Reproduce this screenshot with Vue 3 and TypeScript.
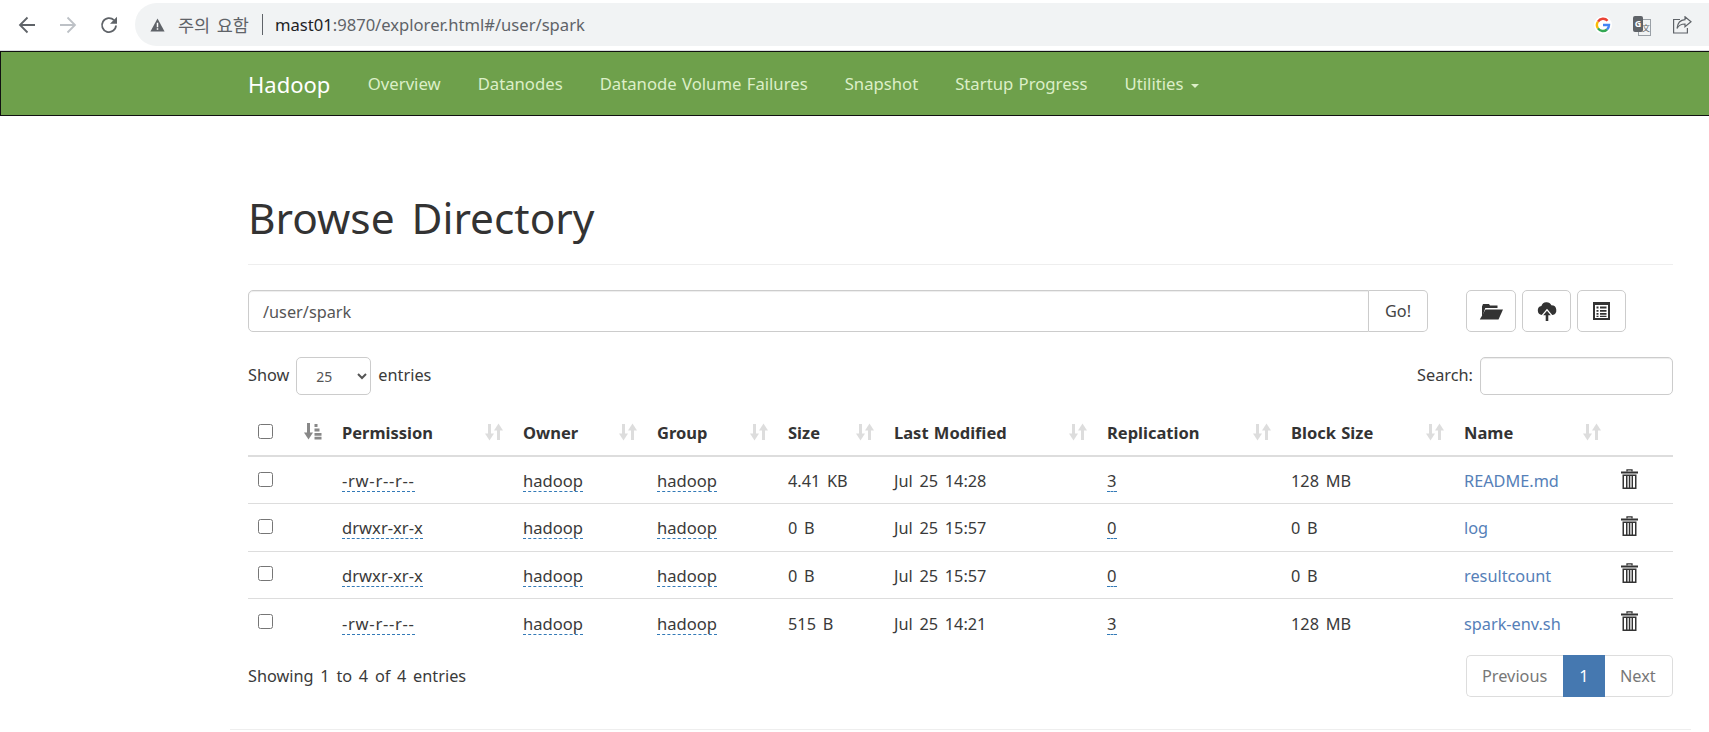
<script setup lang="ts">
interface Row { perm: string; size: string; date: string; rep: string; block: string; name: string }
const headers = [
  { label: 'Permission', cls: 'perm' },
  { label: 'Owner', cls: 'owner' },
  { label: 'Group', cls: 'group' },
  { label: 'Size', cls: 'size' },
  { label: 'Last Modified', cls: 'date' },
  { label: 'Replication', cls: 'rep' },
  { label: 'Block Size', cls: 'block' },
  { label: 'Name', cls: 'name' },
]
const rows: Row[] = [
  { perm: '-rw-r--r--', size: '4.41 KB', date: 'Jul 25 14:28', rep: '3', block: '128 MB', name: 'README.md' },
  { perm: 'drwxr-xr-x', size: '0 B', date: 'Jul 25 15:57', rep: '0', block: '0 B', name: 'log' },
  { perm: 'drwxr-xr-x', size: '0 B', date: 'Jul 25 15:57', rep: '0', block: '0 B', name: 'resultcount' },
  { perm: '-rw-r--r--', size: '515 B', date: 'Jul 25 14:21', rep: '3', block: '128 MB', name: 'spark-env.sh' },
]
const navItems = ['Overview', 'Datanodes', 'Datanode Volume Failures', 'Snapshot', 'Startup Progress']
</script>

<template>
  <div class="app">
    <header class="chrome">
      <div class="chrome-nav">
        <svg width="18" height="18" viewBox="0 0 18 18"><path d="M17 9H2M9.500 1.500L2 9l7.500 7.500" fill="none" stroke="#5f6368" stroke-width="1.800"/></svg>
        <svg width="18" height="18" viewBox="0 0 18 18"><path d="M1 9h15M8.500 1.500L16 9l-7.500 7.500" fill="none" stroke="#bdc1c6" stroke-width="1.800"/></svg>
        <svg width="18" height="18" viewBox="0 0 18 18"><path d="M16 9.500a7 7 0 1 1-2-5.300" fill="none" stroke="#5f6368" stroke-width="1.800"/><path d="M17 0.800v7h-7z" fill="#5f6368"/></svg>
      </div>
      <div class="omnibox">
        <svg class="warn" width="15" height="14" viewBox="0 0 14 13"><path d="M7 0.500L13.600 12.500H.4z" fill="#5f6368"/><path d="M6.300 4.500h1.400v4.200H6.300zM6.300 9.600h1.400v1.400H6.300z" fill="#fff"/></svg>
        <span class="warn-text">주의 요함</span>
        <span class="sep"></span>
        <span class="url"><b>mast01</b>:9870/explorer.html#/user/spark</span>
        <span class="spacer"></span>
        <span class="g-badge">
          <svg width="16" height="16" viewBox="0 0 16 16">
            <path d="M12.600 3.700A6 6 0 0 0 3 4.600" fill="none" stroke="#ea4335" stroke-width="2.400"/>
            <path d="M3 4.600a6 6 0 0 0 0 6.800" fill="none" stroke="#fbbc05" stroke-width="2.400"/>
            <path d="M3 11.400a6 6 0 0 0 9 1.100" fill="none" stroke="#34a853" stroke-width="2.400"/>
            <path d="M12 12.500A6 6 0 0 0 14 8H8" fill="none" stroke="#4285f4" stroke-width="2.400"/>
          </svg>
        </span>
        <span class="translate">
          <span class="tr-back">文</span>
          <span class="tr-front">G</span>
        </span>
        <svg class="share" width="20" height="18" viewBox="0 0 20 18"><path d="M13 .8l6 5-6 5V8C9 8 6.500 9.500 5 12.500 5.500 7.500 8.500 4 13 3.700z" fill="none" stroke="#5f6368" stroke-width="1.200"/><path d="M8 3.500H1.600V17h13.800v-5" fill="none" stroke="#5f6368" stroke-width="1.200"/></svg>
      </div>
    </header>

    <nav class="navbar">
      <a class="brand">Hadoop</a>
      <a v-for="item in navItems" :key="item" class="nav-link">{{ item }}</a>
      <a class="nav-link">Utilities <span class="caret"></span></a>
    </nav>

    <main class="container">
      <div class="page-header"><h1>Browse Directory</h1></div>

      <div class="path-row">
        <div class="input-group">
          <div class="path-input">/user/spark</div>
          <button class="go">Go!</button>
        </div>
        <div class="actions">
          <button class="icon-btn b1">
            <svg width="24" height="18" viewBox="0 0 24 18"><path d="M3 15.500V4.500L4 2h6l1 1.500h7.500V6H6.300z" fill="#333"/><path d="M6.500 7.500H24L19.500 17.500H.8z" fill="#333"/></svg>
          </button>
          <button class="icon-btn b2">
            <svg width="20" height="20" viewBox="0 0 20 20"><path d="M5 14a4.500 4.500 0 0 1-.6-8.900 5.400 5.400 0 0 1 10-.8 4.900 4.900 0 0 1 1 9.700z" fill="#333"/><path d="M10 7.800l5.700 6.700H12.800V20H7.200v-5.500H4.300z" fill="#fff"/><path d="M10 9.800l3.800 4.400h-2.500V20H8.700v-5.800H6.200z" fill="#333"/></svg>
          </button>
          <button class="icon-btn b3">
            <svg width="18" height="18" viewBox="0 0 18 18"><path fill-rule="evenodd" d="M0 0h17v18H0zM2 3v13h13V3z" fill="#333"/><path d="M3.500 4.500h2v2h-2zM7 4.500h6.500v2H7zM3.500 8h2v1.800h-2zM7 8h6.500v1.800H7zM3.500 11h2v1.800h-2zM7 11h6.500v1.800H7zM3.500 13.800h2v1.200h-2zM7 13.800h6.500v1.200H7z" fill="#333"/></svg>
          </button>
        </div>
      </div>

      <div class="filter-row">
        <label class="length">Show
          <select class="length-select"><option>25</option></select>
          entries</label>
        <label class="search">Search: <input class="search-input" type="text" /></label>
      </div>

      <table class="files">
        <thead>
          <tr>
            <th class="c-check"><input type="checkbox" /></th>
            <th class="c-order">
              <svg class="order-icon" width="18" height="18" viewBox="0 0 18 18"><path d="M3 1h3v11H3z" fill="#888"/><path d="M0 10.500h9L4.500 17.500z" fill="#888"/><path d="M10.500 2h3v3h-3zM10.500 6.500h5v3h-5zM10.500 11h7v2.800h-7zM10.500 14.800h7v2.700h-7z" fill="#888"/></svg>
            </th>
            <th v-for="h in headers" :key="h.label" :class="'c-' + h.cls">
              {{ h.label }}
              <svg class="sort-icon" width="18" height="18" viewBox="0 0 18 18"><path d="M3 1h3v11H3z" fill="#ddd"/><path d="M0 10.500h9L4.500 17.500z" fill="#ddd"/><path d="M12 6h3v11h-3z" fill="#ddd"/><path d="M9 7.500h9L13.500 .5z" fill="#ddd"/></svg>
            </th>
            <th class="c-del"></th>
          </tr>
        </thead>
        <tbody>
          <tr v-for="r in rows" :key="r.name">
            <td class="cb"><input type="checkbox" /></td>
            <td></td>
            <td><span class="editable" :class="{ hyphens: r.perm.startsWith('-') }">{{ r.perm }}</span></td>
            <td><span class="editable">hadoop</span></td>
            <td><span class="editable">hadoop</span></td>
            <td>{{ r.size }}</td>
            <td>{{ r.date }}</td>
            <td><span class="editable">{{ r.rep }}</span></td>
            <td>{{ r.block }}</td>
            <td><a class="file-link">{{ r.name }}</a></td>
            <td class="del">
              <svg width="17" height="20" viewBox="0 0 17 20"><path d="M6 2.500V.8h5v1.700" fill="none" stroke="#333" stroke-width="1.300"/><path d="M0 2.500h17v2H0z" fill="#333"/><path fill-rule="evenodd" d="M1.500 5.500h14V20h-14zM3 7v11.500h2V7zM6.500 7v11.500h1.300V7zM9.300 7v11.500h1.300V7zM12 7v11.500h2V7z" fill="#333"/></svg>
            </td>
          </tr>
        </tbody>
      </table>

      <div class="table-foot">
        <div class="info">Showing 1 to 4 of 4 entries</div>
        <div class="pagination">
          <a class="page first">Previous</a>
          <a class="page active">1</a>
          <a class="page last">Next</a>
        </div>
      </div>
      <div class="footer-rule"></div>
    </main>
  </div>
</template>

<style>
html, body { margin: 0; background: #fff; overflow: hidden; }
</style>

<style scoped>
.app {
  width: 1709px;
  height: 732px;
  overflow: hidden;
  font-family: "Noto Sans", "Noto Sans CJK KR", sans-serif;
  font-size: 16.300px;
  word-spacing: 2.500px;
  color: #3a3a3a;
}
.chrome {
  display: flex;
  box-sizing: border-box;
  padding-top: 3px;
  border-bottom: 1px solid #dadce0;
  height: 51px;
}
.chrome-nav {
  width: 135px;
  height: 43px;
  padding-left: 18px;
  box-sizing: border-box;
  display: flex;
  align-items: center;
  gap: 23px;
  flex: none;
}
.omnibox {
  flex: 1;
  height: 43px;
  background: #f1f3f4;
  border-radius: 21.500px 0 0 21.500px;
  display: flex;
  align-items: center;
  padding-left: 15px;
}
.warn { margin-right: 13px; }
.warn-text { color: #5f6368; font-size: 17.500px; word-spacing: 2px; }
.sep { width: 1px; height: 21px; background: #5f6368; margin: 0 12px 0 13px; }
.url { color: #5f6368; font-size: 16.600px; word-spacing: 0; }
.url b { font-weight: 400; color: #202124; }
.spacer { flex: 1; }
.g-badge {
  width: 18px; height: 18px; border-radius: 50%; background: #fff;
  display: flex; align-items: center; justify-content: center;
}
.translate { position: relative; width: 18px; height: 18px; margin: 0 21px 0 21px; }
.tr-back {
  position: absolute; right: 0; top: 3px; width: 11px; height: 15px;
  border: 1px solid #9aa0a6; background: #f1f3f4; color: #5f6368;
  font-size: 8px; line-height: 15px; text-align: right;
}
.tr-front {
  position: absolute; left: 0; top: 0; width: 10px; height: 16px; border-radius: 2px;
  background: #5f6368; color: #fff; font-size: 9px; font-weight: 700; line-height: 16px; text-align: center;
}
.share { margin-right: 17px; }

.navbar {
  height: 65px;
  box-sizing: border-box;
  background: #6ea04b;
  border: 1px solid #111;
  border-right: 0;
  display: flex;
  align-items: center;
  padding-left: 247px;
  word-spacing: 1px;
}
.brand { color: #fff; font-size: 22px; margin-right: 19px; }
.nav-link { color: #dcefc8; font-size: 16.700px; padding: 0 18.500px; }
.caret {
  display: inline-block;
  vertical-align: middle;
  margin-left: 2px;
  border-top: 4.500px solid #dcefc8;
  border-left: 4.500px solid transparent;
  border-right: 4.500px solid transparent;
}

.container { padding: 0 18px; margin-left: 230px; width: 1461px; box-sizing: border-box; }
.page-header { margin-top: 77px; padding-bottom: 21px; border-bottom: 1px solid #eee; }
h1 { margin: 0; font-size: 42.400px; line-height: 50px; font-weight: 400; color: #333; word-spacing: 6px; }

.path-row { display: flex; margin-top: 25px; }
.input-group { display: flex; width: 1180px; height: 42px; }
.path-input {
  flex: 1;
  border: 1px solid #ccc;
  border-radius: 5px 0 0 5px;
  box-shadow: inset 0 1px 1px rgba(0,0,0,.075);
  padding-left: 14px;
  line-height: 42px;
  color: #555;
}
.go {
  width: 59px;
  border: 1px solid #ccc;
  border-left: 0;
  border-radius: 0 5px 5px 0;
  background: #fff;
  color: #444;
  font: inherit;
  padding: 0;
}
.actions { display: flex; gap: 6px; margin-left: 38px; }
.icon-btn {
  height: 42px;
  width: 49px;
  padding: 0;
  border: 1px solid #ccc;
  border-radius: 5px;
  background: #fff;
  display: flex;
  align-items: center;
  justify-content: center;
}
.b1 { width: 50px; }

.filter-row {
  display: flex;
  justify-content: space-between;
  align-items: center;
  margin-top: 25px;
  height: 38px;
}
.length { display: flex; align-items: center; gap: 7px; margin-top: -3px; }
.length-select {
  width: 75px;
  height: 38px;
  margin-top: 3px;
  border: 1px solid #ccc;
  border-radius: 5px;
  background: #fff;
  color: #555;
  font: inherit;
  font-size: 14px;
  padding-left: 15px;
}
.search { display: flex; align-items: center; gap: 7px; margin-top: -3px; }
.search-input {
  width: 193px;
  height: 38px;
  margin-top: 3px;
  box-sizing: border-box;
  border: 1px solid #ccc;
  border-radius: 5px;
  box-shadow: inset 0 1px 1px rgba(0,0,0,.075);
}

.files {
  width: 1425px;
  margin-top: 15px;
  table-layout: fixed;
  border-collapse: separate;
  border-spacing: 0;
}
.files th {
  position: relative;
  height: 47px;
  box-sizing: border-box;
  padding: 0 10px;
  text-align: left;
  font-weight: 700;
  font-size: 16.500px;
  word-spacing: 1px;
  color: #333;
  border-bottom: 2px solid #ddd;
}
.files td {
  height: 47.300px;
  box-sizing: border-box;
  padding: 2px 10px 0;
  border-bottom: 1px solid #ddd;
}
.files tr:last-child td { border-bottom: 0; }
.files input[type="checkbox"] { width: 15px; height: 15px; margin: 0; display: block; }
.files th input[type="checkbox"] { position: relative; top: -1px; }
.c-check { width: 46px; }
.c-order { width: 38px; }
.c-perm { width: 181px; }
.c-owner { width: 134px; }
.c-group { width: 131px; }
.c-size { width: 106px; }
.c-date { width: 213px; }
.c-rep { width: 184px; }
.c-block { width: 173px; }
.c-name { width: 157px; }
.c-del { width: 62px; }
.order-icon { position: absolute; left: 10px; top: 12px; }
.sort-icon { position: absolute; right: 10px; top: 13px; }
.cb input { position: relative; top: -2px; }
.editable { border-bottom: 1px dashed #337ab7; display: inline-block; line-height: 20px; font-size: 16.600px; }
.hyphens { letter-spacing: .700px; }
.file-link { color: #5580b8; }
.del svg { display: block; margin-top: -5px; }

.table-foot {
  display: flex;
  justify-content: space-between;
  align-items: center;
  margin-top: 9px;
  height: 42px;
}
.pagination { display: flex; height: 42px; }
.page {
  box-sizing: border-box;
  height: 42px;
  line-height: 40px;
  border: 1px solid #ddd;
  color: #777;
  padding: 0 15px;
  background: #fff;
}
.first { border-radius: 5px 0 0 5px; border-right: 0; width: 97px; }
.active { background: #4578b0; color: #fff; border-color: #4578b0; width: 42px; padding: 0; text-align: center; }
.last { border-radius: 0 5px 5px 0; border-left: 0; width: 68px; }
.footer-rule { height: 1px; background: #eee; margin: 32px -18px 0; }
</style>
